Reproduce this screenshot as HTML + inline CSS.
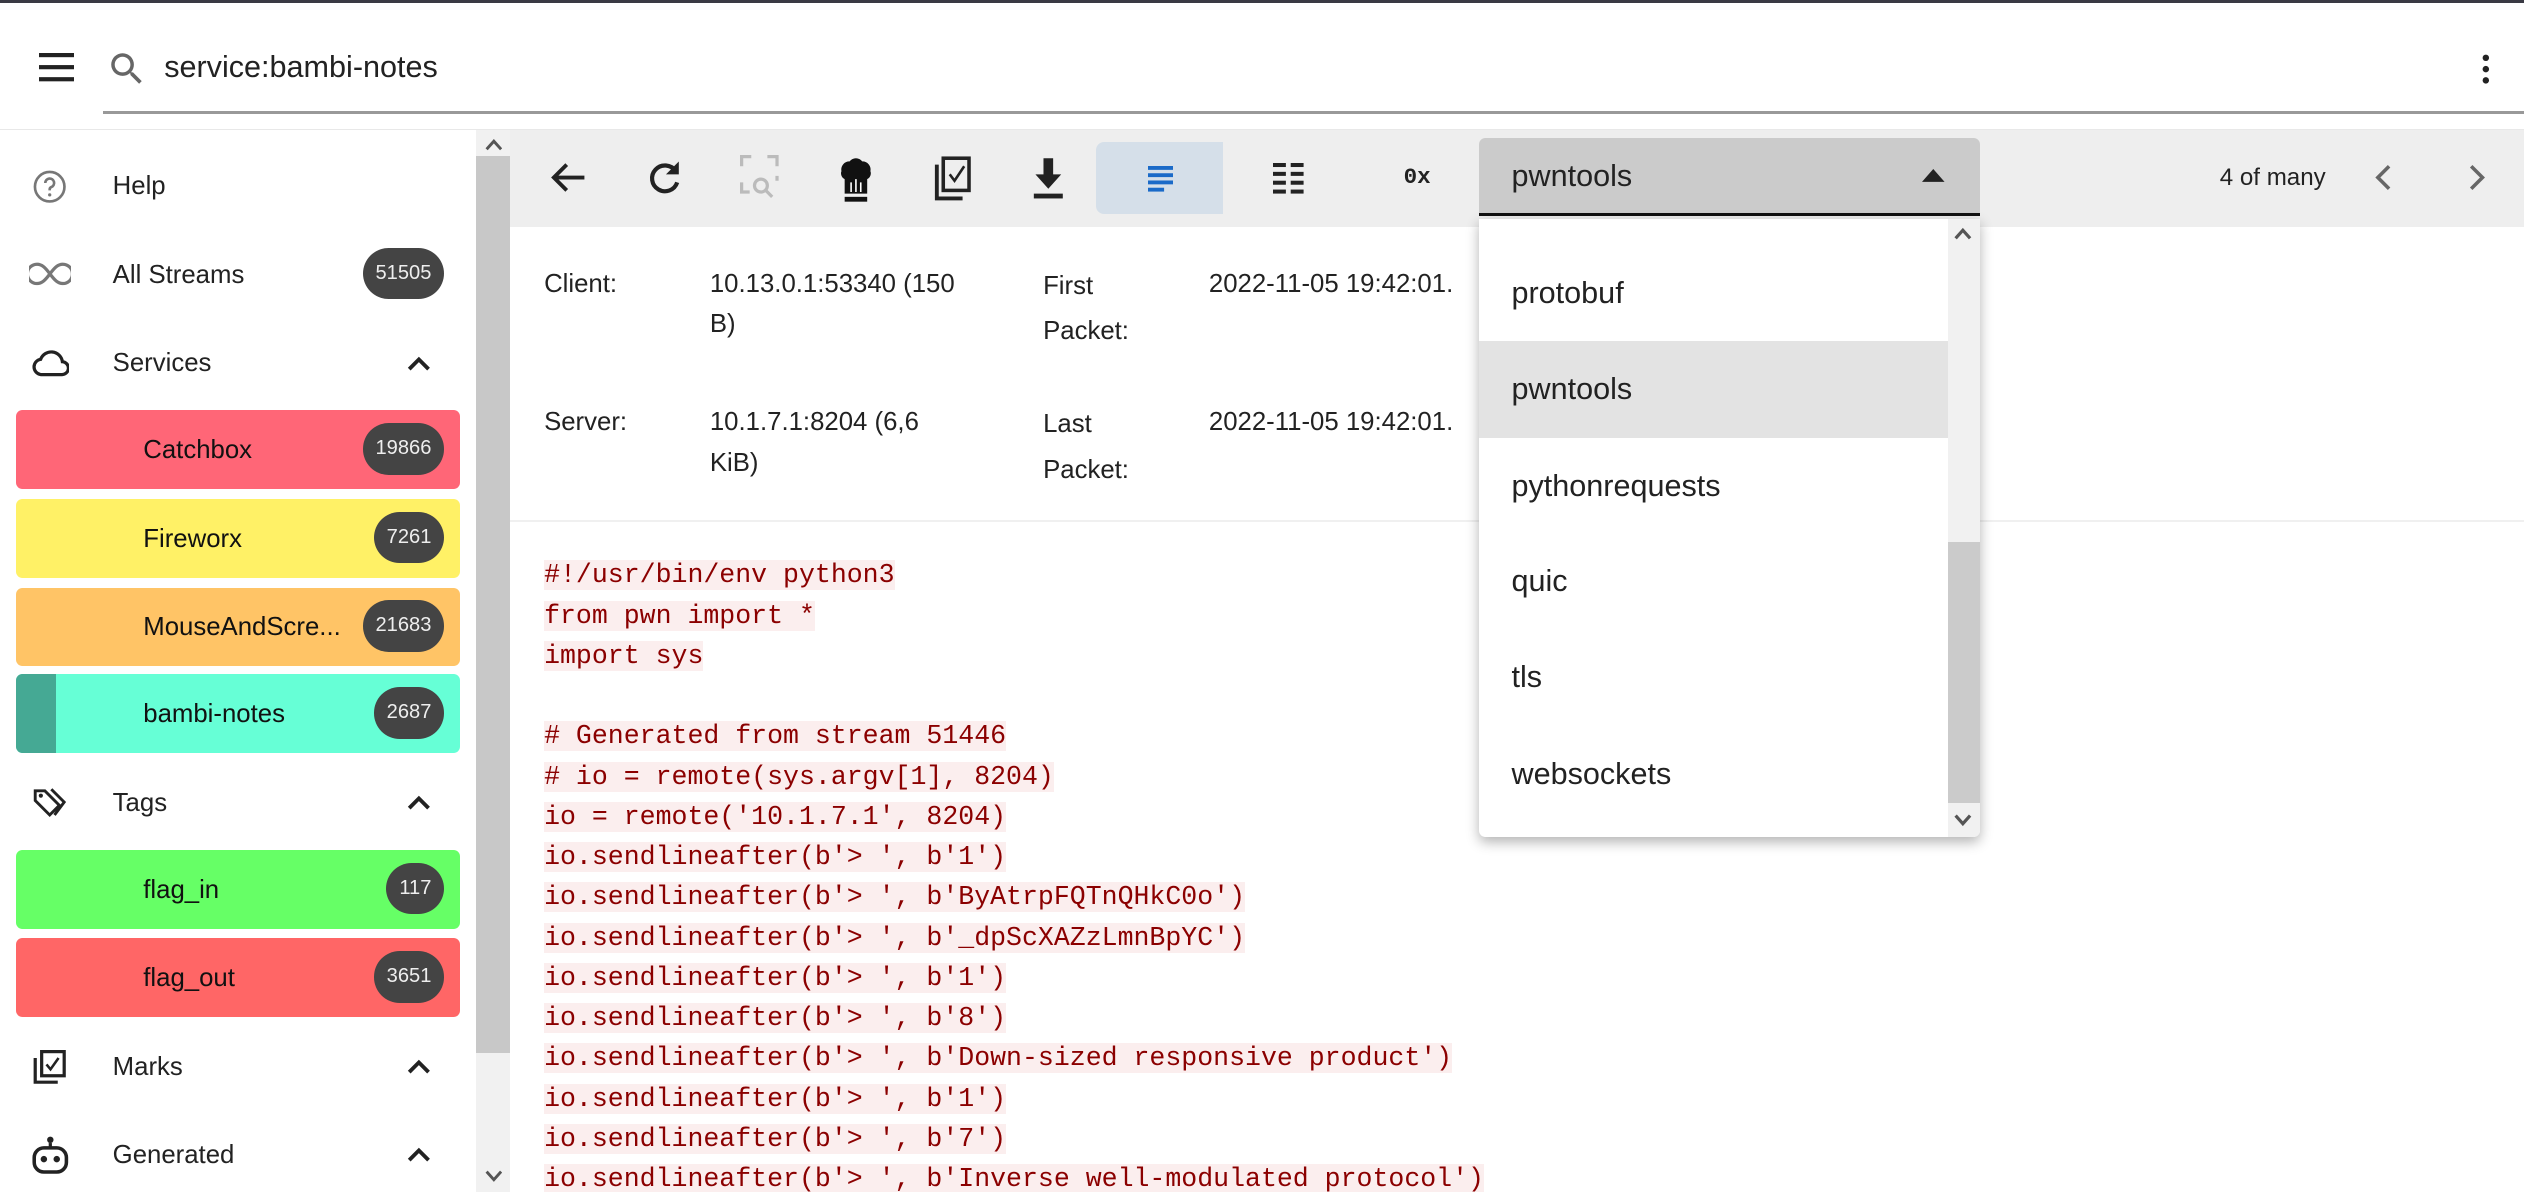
<!DOCTYPE html>
<html><head><meta charset="utf-8"><style>
*{box-sizing:border-box;margin:0;padding:0}
html,body{width:2524px;height:1192px;overflow:hidden;background:#fff}
#root{zoom:1.60969;width:1568px;height:741px;position:relative;font-family:"Liberation Sans",sans-serif;color:#222;overflow:hidden}
.a{position:absolute}
.top{left:0;top:0;width:1568px;height:81px;border-top:2px solid #3a3a44;border-bottom:1px solid #e8e8e8}
.sb{left:296px;top:81px;width:21px;height:660px;background:#f1f1f1}
.thumb{left:296px;top:97px;width:21px;height:557px;background:#c8c8c8}
.item{left:0;width:296px;height:50px;font-size:16px}
.item span.t{position:absolute;left:70px;top:17px}
.svc{left:10px;width:276px;height:49px;border-radius:4px;font-size:16px}
.svc .t{position:absolute;left:79px;top:16px;color:#111}
.badge{position:absolute;right:10px;top:8px;height:32px;border-radius:16px;background:#444;color:#eee;font-size:12.5px;line-height:32px;padding:0 8px}
.item .badge{top:9px;right:20px}
.chev{position:absolute;left:252px;top:19px}
.tb{left:317px;top:81px;width:1251px;height:60px;background:#eee}
.ic{position:absolute;top:96px}
.lbl{font-size:16px;color:#222;line-height:25px}
.code{left:338px;top:345px;font-family:"Liberation Mono",monospace;font-size:16.5px;line-height:25px;color:#8b0000;white-space:pre}
.code span{background:#fbeeee}
.dd{left:919px;top:136px;width:311px;height:384px;background:#fff;border-radius:0 0 4px 4px;box-shadow:0 3px 8px rgba(0,0,0,.3);overflow:hidden}
.opt{position:absolute;left:0;width:291px;height:60px;font-size:19px;padding-left:20px;line-height:60px;color:#222}
</style></head><body><div id="root">
<div class="a top">
 <svg class="a" style="left:24px;top:31px" width="22" height="18"><rect y="0" width="22" height="2.6" fill="#222"/><rect y="7.5" width="22" height="2.6" fill="#222"/><rect y="15" width="22" height="2.6" fill="#222"/></svg>
 <svg class="a" style="left:66px;top:28px" width="26" height="26" viewBox="0 0 24 24"><path d="M15.5 14h-.79l-.28-.27A6.47 6.47 0 0 0 16 9.5 6.5 6.5 0 1 0 9.5 16c1.61 0 3.09-.59 4.23-1.57l.27.28v.79l5 4.99L20.49 19l-4.99-5zm-6 0C7.01 14 5 11.99 5 9.5S7.01 5 9.5 5 14 7.01 14 9.5 11.99 14 9.5 14z" fill="#666"/></svg>
 <div class="a" style="left:102px;top:29px;font-size:19px;color:#222">service:bambi-notes</div>
 <div class="a" style="left:64px;top:67px;width:1504px;height:2px;background:#999"></div>
 <svg class="a" style="left:1541px;top:31px" width="6" height="20"><circle cx="3" cy="3" r="2" fill="#222"/><circle cx="3" cy="10" r="2" fill="#222"/><circle cx="3" cy="17" r="2" fill="#222"/></svg>
</div>
<div class="a sb"></div><div class="a thumb"></div>
<svg class="a" style="left:301px;top:86px" width="11" height="8"><path d="M1 7l4.5-5 4.5 5" fill="none" stroke="#555" stroke-width="1.8"/></svg>
<svg class="a" style="left:301px;top:727px" width="11" height="8"><path d="M1 1l4.5 5 4.5-5" fill="none" stroke="#555" stroke-width="1.8"/></svg>

<div class="a item" style="top:90px"><svg class="a" style="left:20px;top:15px" width="22" height="22" viewBox="0 0 24 24"><circle cx="12" cy="12" r="10" fill="none" stroke="#777" stroke-width="1.8"/><path d="M9 9.5a3 3 0 1 1 4 2.8c-.7.3-1 .8-1 1.5v.7" fill="none" stroke="#777" stroke-width="1.8"/><circle cx="12" cy="17.5" r="1.1" fill="#777"/></svg><span class="t">Help</span></div>
<div class="a item" style="top:145px"><svg class="a" style="left:18px;top:17px" width="26" height="16" viewBox="0 0 26 16"><path d="M13 8c-3-4-5-6-8-6a6 6 0 0 0 0 12c3 0 5-2 8-6s5-6 8-6a6 6 0 0 1 0 12c-3 0-5-2-8-6z" fill="none" stroke="#777" stroke-width="2"/></svg><span class="t">All Streams</span><span class="badge">51505</span></div>
<div class="a item" style="top:200px"><svg class="a" style="left:19px;top:14px" width="24" height="22" viewBox="0 0 24 22"><path d="M6 19h13a4 4 0 0 0 .5-8A7 7 0 0 0 6 9.5 4.8 4.8 0 0 0 6 19z" fill="none" stroke="#222" stroke-width="2"/></svg><span class="t">Services</span><svg class="chev" width="16" height="12"><path d="M2 10l6-6 6 6" fill="none" stroke="#222" stroke-width="2.4"/></svg></div>
<div class="a svc" style="top:255px;background:#ff6677"><span class="t">Catchbox</span><span class="badge">19866</span></div>
<div class="a svc" style="top:310px;background:#fff166"><span class="t">Fireworx</span><span class="badge">7261</span></div>
<div class="a svc" style="top:365px;background:#ffc466"><span class="t">MouseAndScre...</span><span class="badge">21683</span></div>
<div class="a svc" style="top:419px;background:#66ffd6;overflow:hidden"><div class="a" style="left:0;top:0;width:25px;height:49px;background:#45a994"></div><span class="t">bambi-notes</span><span class="badge">2687</span></div>
<div class="a item" style="top:473px"><svg class="a" style="left:20px;top:15px" width="22" height="22" viewBox="0 0 22 22"><path d="M2 3v6l9 9 6-6-9-9H2z M12 2l8 8-6 8" fill="none" stroke="#222" stroke-width="1.8"/><circle cx="5.5" cy="6" r="1.3" fill="#222"/></svg><span class="t">Tags</span><svg class="chev" width="16" height="12"><path d="M2 10l6-6 6 6" fill="none" stroke="#222" stroke-width="2.4"/></svg></div>
<div class="a svc" style="top:528px;background:#66ff66"><span class="t">flag_in</span><span class="badge">117</span></div>
<div class="a svc" style="top:583px;background:#ff6666"><span class="t">flag_out</span><span class="badge">3651</span></div>
<div class="a item" style="top:637px"><svg class="a" style="left:20px;top:15px" width="22" height="22" viewBox="0 0 22 22"><rect x="6" y="1" width="14" height="15" fill="none" stroke="#222" stroke-width="2"/><path d="M2 5v15h14" fill="none" stroke="#222" stroke-width="2"/><path d="M9 9l2.5 3 5-7" fill="none" stroke="#222" stroke-width="1.6"/></svg><span class="t">Marks</span><svg class="chev" width="16" height="12"><path d="M2 10l6-6 6 6" fill="none" stroke="#222" stroke-width="2.4"/></svg></div>
<div class="a item" style="top:692px"><svg class="a" style="left:19px;top:13px" width="24" height="26" viewBox="0 0 24 26"><circle cx="12" cy="3" r="2" fill="#222"/><path d="M12 5v3" stroke="#222" stroke-width="2"/><rect x="2" y="8" width="20" height="15" rx="6" fill="none" stroke="#222" stroke-width="2.2"/><circle cx="8" cy="15" r="2" fill="#222"/><circle cx="16" cy="15" r="2" fill="#222"/></svg><span class="t">Generated</span><svg class="chev" width="16" height="12"><path d="M2 10l6-6 6 6" fill="none" stroke="#222" stroke-width="2.4"/></svg></div>

<div class="a tb"></div>
<svg class="ic" style="left:341px" width="24" height="28" viewBox="0 0 24 28"><path d="M22 14H4M11 6l-8 8 8 8" fill="none" stroke="#222" stroke-width="2.4"/></svg>
<svg class="ic" style="left:401px" width="24" height="28" viewBox="0 0 24 28"><path d="M19 10A8 8 0 1 0 20 17" fill="none" stroke="#222" stroke-width="2.6"/><path d="M21 4v8h-8z" fill="#222"/></svg>
<svg class="ic" style="left:460px" width="24" height="30" viewBox="0 0 24 30"><path d="M1 7V1h6M17 1h6v6M1 17v6h5M23 13v3" fill="none" stroke="#bbb" stroke-width="2"/><circle cx="13" cy="19" r="4" fill="none" stroke="#bbb" stroke-width="2"/><path d="M16 22l4 4" stroke="#bbb" stroke-width="2"/></svg>
<svg class="ic" style="left:519px" width="26" height="30" viewBox="0 0 26 30"><path d="M4 10a5 5 0 0 1 5-6 5 5 0 0 1 8 0 5 5 0 0 1 5 6 4 4 0 0 1-2 5v9H6v-9a4 4 0 0 1-2-5z" fill="#111"/><path d="M10 17v6M13 15v8M16 17v6" stroke="#fff" stroke-width="1"/><rect x="6" y="26" width="14" height="3" fill="#111"/></svg>
<svg class="ic" style="left:579px" width="26" height="30" viewBox="0 0 26 30"><rect x="7" y="2" width="16" height="20" fill="none" stroke="#222" stroke-width="2.2"/><path d="M3 6v21h16" fill="none" stroke="#222" stroke-width="2.4"/><path d="M11 12l3 4 6-9" fill="none" stroke="#222" stroke-width="1.6"/></svg>
<svg class="ic" style="left:639px" width="24" height="30" viewBox="0 0 24 30"><path d="M9 2h6v10h5l-8 9-8-9h5z" fill="#222"/><rect x="3" y="24" width="18" height="3" fill="#222"/></svg>
<div class="a" style="left:681px;top:88px;width:79px;height:45px;background:#d5dfe9;border-radius:5px 0 0 5px"></div>
<svg class="a" style="left:713px;top:103px" width="16" height="16"><rect y="0" width="16" height="2.4" fill="#1a6ac8"/><rect y="4.5" width="16" height="2.4" fill="#1a6ac8"/><rect y="9" width="16" height="2.4" fill="#1a6ac8"/><rect y="13.5" width="10" height="2.4" fill="#1a6ac8"/></svg>
<svg class="a" style="left:791px;top:101px" width="19" height="20"><g fill="#222"><rect y="0" width="8" height="2.5"/><rect x="11" y="0" width="8" height="2.5"/><rect y="5.5" width="8" height="2.5"/><rect x="11" y="5.5" width="8" height="2.5"/><rect y="11" width="8" height="2.5"/><rect x="11" y="11" width="8" height="2.5"/><rect y="16.5" width="8" height="2.5"/><rect x="11" y="16.5" width="8" height="2.5"/></g></svg>
<div class="a" style="left:872px;top:102px;font-size:14px;font-weight:bold;font-family:'Liberation Mono',monospace;color:#222">0x</div>
<div class="a" style="left:919px;top:86px;width:311px;height:48px;background:#cbcbcb;border-radius:4px 4px 0 0;border-bottom:2px solid #111"></div>
<div class="a" style="left:939px;top:99px;font-size:19px;color:#222">pwntools</div>
<svg class="a" style="left:1194px;top:105px" width="14" height="9"><path d="M0 8L7 0l7 8z" fill="#222"/></svg>
<div class="a" style="left:1379px;top:102px;font-size:15px;color:#222">4 of many</div>
<svg class="a" style="left:1474px;top:101px" width="12" height="18"><path d="M10 2L3 9l7 7" fill="none" stroke="#666" stroke-width="2.2"/></svg>
<svg class="a" style="left:1533px;top:101px" width="12" height="18"><path d="M2 2l7 7-7 7" fill="none" stroke="#666" stroke-width="2.2"/></svg>

<div class="a lbl" style="left:338px;top:164px">Client:</div>
<div class="a lbl" style="left:441px;top:164px;width:190px">10.13.0.1:53340 (150<br>B)</div>
<div class="a lbl" style="left:648px;top:164px;line-height:28px">First<br>Packet:</div>
<div class="a lbl" style="left:751px;top:164px">2022-11-05 19:42:01.</div>
<div class="a lbl" style="left:338px;top:250px">Server:</div>
<div class="a lbl" style="left:441px;top:250px">10.1.7.1:8204 (6,6<br>KiB)</div>
<div class="a lbl" style="left:648px;top:250px;line-height:28px">Last<br>Packet:</div>
<div class="a lbl" style="left:751px;top:250px">2022-11-05 19:42:01.</div>
<div class="a" style="left:317px;top:323px;width:1251px;height:1px;background:#f0f0f0"></div>

<div class="a code"><span>#!/usr/bin/env python3</span>
<span>from pwn import *</span>
<span>import sys</span>

<span># Generated from stream 51446</span>
<span># io = remote(sys.argv[1], 8204)</span>
<span>io = remote('10.1.7.1', 8204)</span>
<span>io.sendlineafter(b'&gt; ', b'1')</span>
<span>io.sendlineafter(b'&gt; ', b'ByAtrpFQTnQHkC0o')</span>
<span>io.sendlineafter(b'&gt; ', b'_dpScXAZzLmnBpYC')</span>
<span>io.sendlineafter(b'&gt; ', b'1')</span>
<span>io.sendlineafter(b'&gt; ', b'8')</span>
<span>io.sendlineafter(b'&gt; ', b'Down-sized responsive product')</span>
<span>io.sendlineafter(b'&gt; ', b'1')</span>
<span>io.sendlineafter(b'&gt; ', b'7')</span>
<span>io.sendlineafter(b'&gt; ', b'Inverse well-modulated protocol')</span></div>

<div class="a dd">
 <div class="opt" style="top:16px">protobuf</div>
 <div class="opt" style="top:76px;background:#e3e3e3">pwntools</div>
 <div class="opt" style="top:136px">pythonrequests</div>
 <div class="opt" style="top:195px">quic</div>
 <div class="opt" style="top:255px">tls</div>
 <div class="opt" style="top:315px">websockets</div>
 <div class="a" style="left:291px;top:0;width:20px;height:384px;background:#f1f1f1"></div>
 <div class="a" style="left:291px;top:201px;width:20px;height:162px;background:#cbcbcb"></div>
 <svg class="a" style="left:295px;top:5px" width="11" height="8"><path d="M1 7l4.5-5 4.5 5" fill="none" stroke="#555" stroke-width="2"/></svg>
 <svg class="a" style="left:295px;top:370px" width="11" height="8"><path d="M1 1l4.5 5 4.5-5" fill="none" stroke="#555" stroke-width="2"/></svg>
</div>
</div></body></html>
